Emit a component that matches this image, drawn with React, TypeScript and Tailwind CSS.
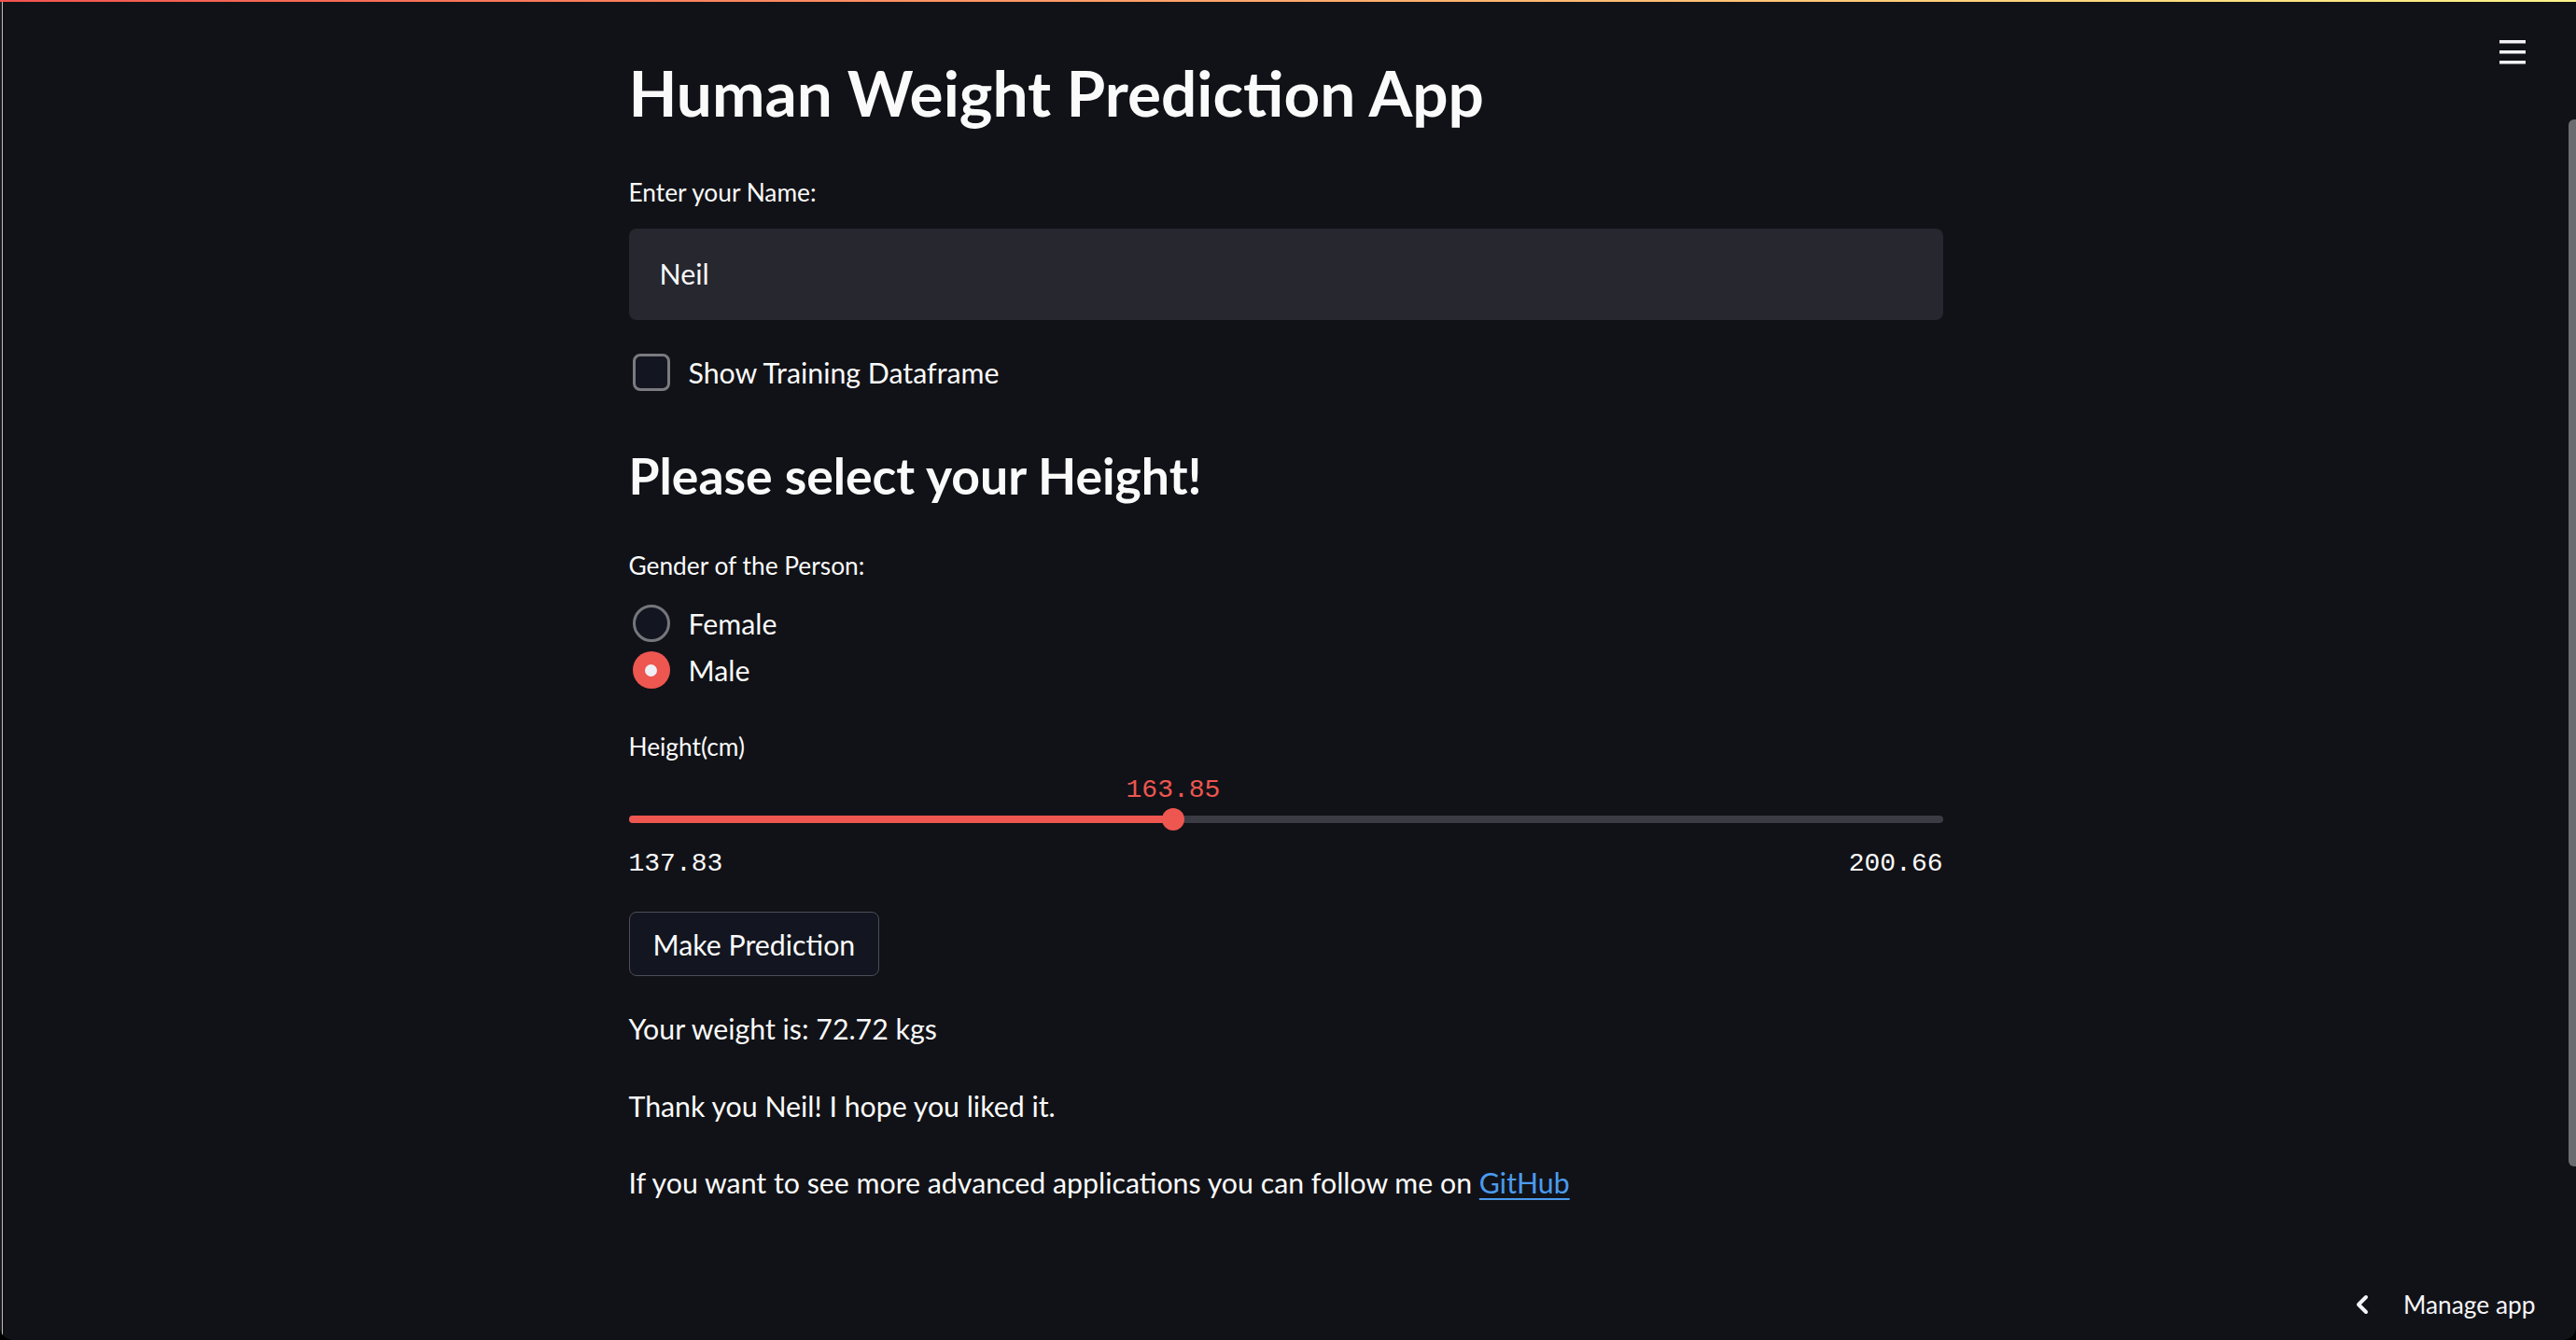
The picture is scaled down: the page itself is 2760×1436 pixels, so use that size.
import React from "react";

const SANS = { fontFamily: "Lato, 'Noto Sans', sans-serif" };
const MONO = { fontFamily: "'Liberation Mono', monospace" };

export default function App() {
  return (
    <div className="w-[2760px] h-[1436px] bg-black overflow-hidden">
      <div
        className="relative w-[2760px] h-[1436px] bg-[#111217] rounded-b-[14px] overflow-hidden flex flex-row text-[#fafafa]"
        style={SANS}
      >
        {/* top decoration */}
        <div className="absolute top-0 left-0 right-0 h-[2px] bg-gradient-to-r from-[#f2534f] to-[#fff489]" />
        {/* window left edge */}
        <div className="w-[2px] shrink-0 bg-[#1a1a1c]" />
        <div className="w-[1px] shrink-0 bg-[#bdbdbd]" />

        {/* main */}
        <div className="flex-1 flex flex-col">
          <div className="w-[1408px] mx-auto flex flex-col">
            <h1 className="mt-[49px] h-[100px] leading-[100px] text-[67.5px] font-bold whitespace-nowrap">
              Human Weight Prediction App
            </h1>

            <label className="mt-[37px] h-[40px] leading-[40px] text-[26.3px]">
              Enter your Name:
            </label>
            <div className="mt-[19px] h-[98px] rounded-[8px] bg-[#26272f] flex items-center pl-[33px]">
              <span className="leading-[40px] text-[30.3px] -mt-[2px]">Neil</span>
            </div>

            <div className="mt-[36px] h-[40px] flex items-center pl-[4px] gap-[20px]">
              <div className="w-[40px] h-[40px] rounded-[8px] border-[3px] border-[#7a7b80] bg-[#131620]" />
              <span className="leading-[40px] text-[30.3px]">Show Training Dataframe</span>
            </div>

            <h2 className="mt-[55px] h-[70px] leading-[70px] text-[53.5px] font-bold whitespace-nowrap">
              Please select your Height!
            </h2>

            <label className="mt-[42px] h-[40px] leading-[40px] text-[26.3px]">
              Gender of the Person:
            </label>

            <div className="mt-[22px] flex flex-col gap-[10px]">
              <div className="h-[40px] flex items-center pl-[4px] gap-[20px]">
                <div className="w-[40px] h-[40px] rounded-full border-[3px] border-[#75767c] bg-[#131620]" />
                <span className="leading-[40px] text-[30.3px]">Female</span>
              </div>
              <div className="h-[40px] flex items-center pl-[4px] gap-[20px]">
                <div className="w-[40px] h-[40px] rounded-full bg-[#ee5650] flex items-center justify-center">
                  <div className="w-[13px] h-[13px] rounded-full bg-[#eef0f5]" />
                </div>
                <span className="leading-[40px] text-[30.3px]">Male</span>
              </div>
            </div>

            <label className="mt-[42px] h-[40px] leading-[40px] text-[26.3px]">
              Height(cm)
            </label>

            {/* slider */}
            <div className="mt-[11px] relative h-[32px]">
              <span
                className="absolute top-0 -translate-x-1/2 leading-[32px] text-[28px] text-[#ee5650]"
                style={{ left: "41.44%", ...MONO }}
              >
                163.85
              </span>
            </div>
            <div className="mt-[3px] relative h-[24px] flex items-center">
              <div className="w-full h-[8px] rounded-full bg-[#3a3b43]" />
              <div
                className="absolute left-0 top-[8px] h-[8px] rounded-l-full bg-[#ee5650]"
                style={{ width: "41.44%" }}
              />
              <div
                className="absolute top-0 w-[24px] h-[24px] -ml-[12px] rounded-full bg-[#ee5650]"
                style={{ left: "41.44%" }}
              />
            </div>
            <div
              className="mt-[20px] h-[32px] leading-[32px] text-[28px] flex justify-between"
              style={MONO}
            >
              <span>137.83</span>
              <span>200.66</span>
            </div>

            <div className="mt-[35px] flex">
              <button className="h-[69px] px-[25px] rounded-[8px] border-[1.5px] border-[#4d4e57] bg-[#131620] flex items-center">
                <span className="leading-[40px] text-[30.3px] text-[#fafafa]">Make Prediction</span>
              </button>
            </div>

            <p className="mt-[32px] h-[48px] leading-[48px] text-[30.3px] whitespace-nowrap">
              Your weight is: 72.72 kgs
            </p>
            <p className="mt-[35px] h-[48px] leading-[48px] text-[30.3px] whitespace-nowrap">
              Thank you Neil! I hope you liked it.
            </p>
            <p className="mt-[34px] h-[48px] leading-[48px] text-[30.3px] whitespace-nowrap">
              If you want to see more advanced applications you can follow me on{" "}
              <a href="#" className="text-[#4b9bef] underline decoration-[2px] underline-offset-[5px]">
                GitHub
              </a>
            </p>
          </div>
        </div>

        {/* scrollbar */}
        <div className="w-[8px] shrink-0 flex flex-col">
          <div className="mt-[128px] h-[1122px] w-[8px] rounded-l-[6px] bg-[#6b6c70]" />
        </div>

        {/* hamburger */}
        <svg className="absolute left-[2678px] top-[43px]" width="28" height="26" viewBox="0 0 28 26">
          <rect x="0" y="0" width="28" height="3.5" fill="#f4f4f6" />
          <rect x="0" y="11" width="28" height="3.5" fill="#f4f4f6" />
          <rect x="0" y="22" width="28" height="3.5" fill="#f4f4f6" />
        </svg>

        {/* manage app */}
        <div className="absolute left-[2515px] top-[1378px] h-[40px] flex items-center gap-[32px]">
          <svg width="24" height="26" viewBox="0 0 24 26" className="ml-[4px]">
            <path d="M16 5 L8 13 L16 21" stroke="#f4f4f6" strokeWidth="4" fill="none" strokeLinecap="round" strokeLinejoin="round" />
          </svg>
          <span className="leading-[40px] text-[26.3px] text-[#f4f4f6]">Manage app</span>
        </div>
      </div>
    </div>
  );
}
